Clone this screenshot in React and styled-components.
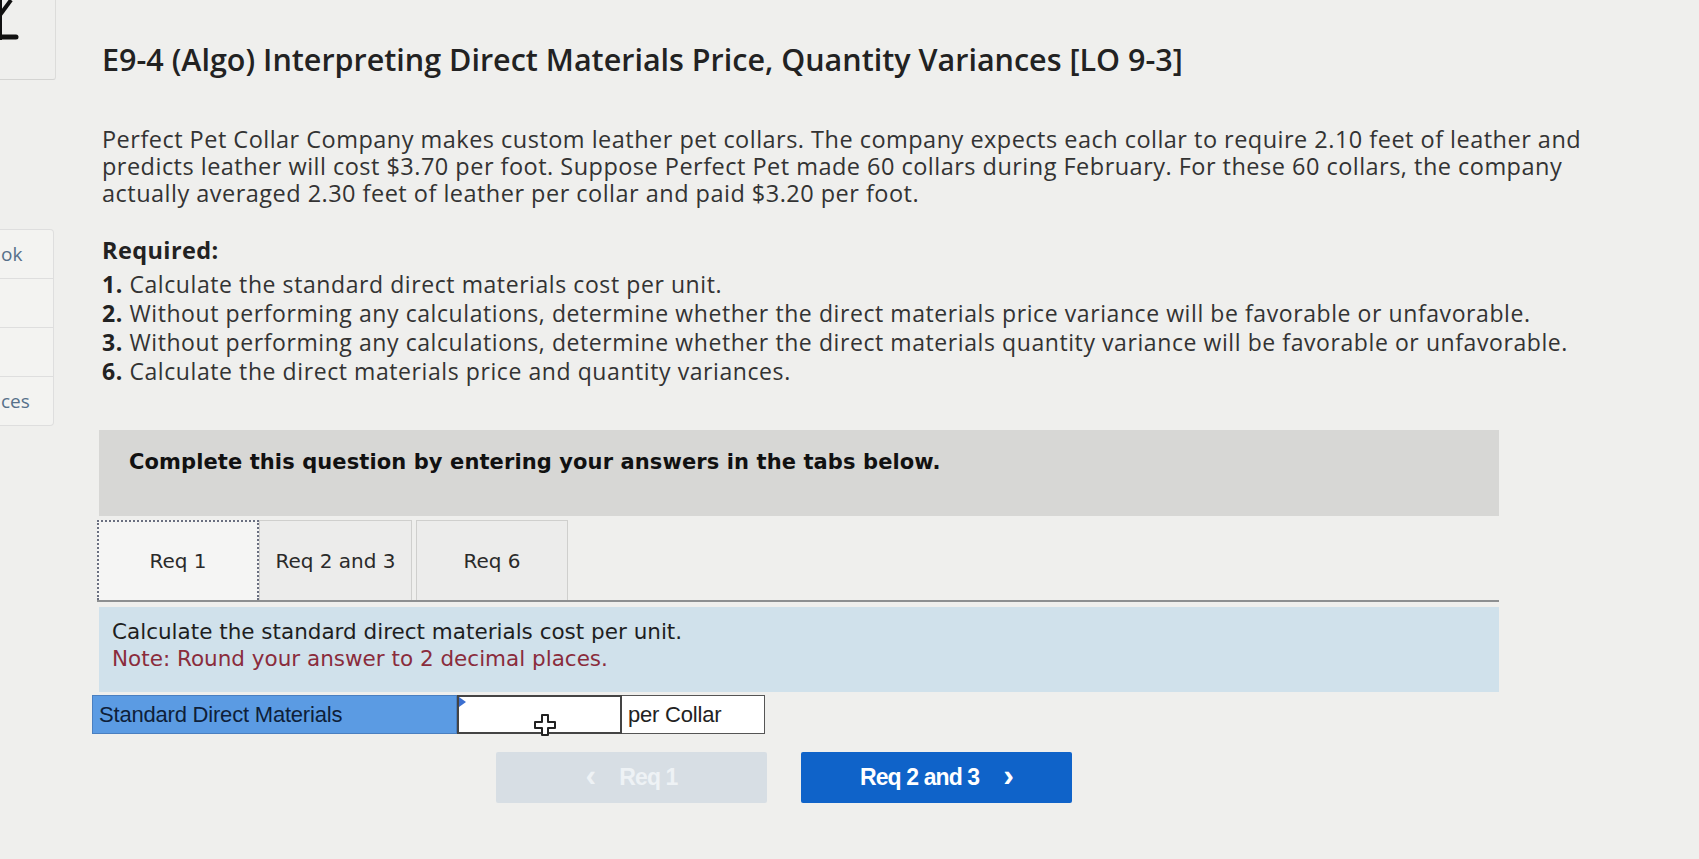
import React from 'react';
import styled, { createGlobalStyle } from 'styled-components';

const GlobalStyle = createGlobalStyle`
  html, body {
    margin: 0;
    padding: 0;
    background: #efefed;
  }
  body {
    font-family: "Open Sans", Lato, "Liberation Sans", sans-serif;
    color: #2b2b2b;
  }
`;

const paragraphLines = [
  'Perfect Pet Collar Company makes custom leather pet collars. The company expects each collar to require 2.10 feet of leather and',
  'predicts leather will cost $3.70 per foot. Suppose Perfect Pet made 60 collars during February. For these 60 collars, the company',
  'actually averaged 2.30 feet of leather per collar and paid $3.20 per foot.',
];

const requirements = [
  { n: '1.', text: 'Calculate the standard direct materials cost per unit.' },
  { n: '2.', text: 'Without performing any calculations, determine whether the direct materials price variance will be favorable or unfavorable.' },
  { n: '3.', text: 'Without performing any calculations, determine whether the direct materials quantity variance will be favorable or unfavorable.' },
  { n: '6.', text: 'Calculate the direct materials price and quantity variances.' },
];

const tabs = [
  { label: 'Req 1', width: 162, active: true },
  { label: 'Req 2 and 3', width: 153 },
  { label: 'Req 6', width: 152 },
];

export default function App() {
  return (
    <>
      <GlobalStyle />
      <Page>
        <Sidebar>
          <TopCard>
            <svg width="20" height="42" viewBox="0 0 20 42">
              <path d="M1 0 V40" stroke="#111" strokeWidth="2" fill="none" />
              <path d="M0 15 L11 0" stroke="#111" strokeWidth="4" fill="none" />
              <path d="M0 37 L16 37" stroke="#111" strokeWidth="5" strokeLinecap="round" fill="none" />
            </svg>
          </TopCard>
          <NavGroup>
            <NavCell><NavText>ok</NavText></NavCell>
            <NavCell />
            <NavCell />
            <NavCell $last><NavText>ces</NavText></NavCell>
          </NavGroup>
        </Sidebar>

        <Main>
          <Title>E9-4 (Algo) Interpreting Direct Materials Price, Quantity Variances [LO 9-3]</Title>

          <Paragraph>
            {paragraphLines.map((l) => (
              <Line key={l}>{l}</Line>
            ))}
          </Paragraph>

          <Required>Required:</Required>
          <ReqList>
            {requirements.map((r) => (
              <ReqItem key={r.n}>
                <ReqNum>{r.n}</ReqNum> {r.text}
              </ReqItem>
            ))}
          </ReqList>

          <Widget>
            <Instruction>Complete this question by entering your answers in the tabs below.</Instruction>

            <TabBar>
              {tabs.map((t) => (
                <Tab key={t.label} $active={t.active} style={{ width: t.width }}>
                  {t.label}
                </Tab>
              ))}
            </TabBar>

            <Prompt>
              <PromptLine>Calculate the standard direct materials cost per unit.</PromptLine>
              <Note>Note: Round your answer to 2 decimal places.</Note>
            </Prompt>

            <AnswerRow>
              <AnswerLabel>Standard Direct Materials</AnswerLabel>
              <AnswerInput>
                <Marker />
                <svg width="26" height="26" viewBox="0 0 26 26">
                  <path
                    d="M10 3 H16 V10 H23 V16 H16 V23 H10 V16 H3 V10 H10 Z"
                    fill="#fff"
                    stroke="#222"
                    strokeWidth="2"
                    strokeLinejoin="round"
                  />
                </svg>
              </AnswerInput>
              <AnswerUnit>per Collar</AnswerUnit>
            </AnswerRow>

            <ButtonRow>
              <NavButton $disabled>
                <Chevron $side="left">‹</Chevron>Req 1
              </NavButton>
              <NavButton>
                Req 2 and 3<Chevron $side="right">›</Chevron>
              </NavButton>
            </ButtonRow>
          </Widget>
        </Main>
      </Page>
    </>
  );
}

const Page = styled.div`
  display: flex;
  min-height: 859px;
  width: 1699px;
  overflow: hidden;
`;

const Sidebar = styled.div`
  width: 56px;
  flex-shrink: 0;
  display: flex;
  flex-direction: column;
`;

const TopCard = styled.div`
  height: 79px;
  border-right: 1px solid #dcdcda;
  border-bottom: 1px solid #d4d4d2;
  border-bottom-right-radius: 3px;
  svg {
    display: block;
  }
`;

const NavGroup = styled.div`
  margin-top: 149px;
  margin-right: 2px;
  display: flex;
  flex-direction: column;
  border: 1px solid #dedede;
  border-left: none;
  border-radius: 0 4px 4px 0;
  background: #f3f3f1;
`;

const NavCell = styled.div`
  height: 48px;
  display: flex;
  align-items: center;
  border-bottom: ${(p) => (p.$last ? 'none' : '1px solid #dedede')};
  overflow: hidden;
`;

const NavText = styled.span`
  margin-left: 1px;
  font-size: 19px;
  color: #56708a;
`;

const Main = styled.div`
  flex: 1;
  padding-left: 46px;
  padding-top: 40px;
`;

const Title = styled.h1`
  margin: 0;
  font-size: 30.5px;
  line-height: 38px;
  font-weight: 600;
  color: #222;
  white-space: nowrap;
`;

const Paragraph = styled.div`
  margin-top: 48px;
  font-size: 23.5px;
  letter-spacing: 0.48px;
  line-height: 27px;
  color: #333;
`;

const Line = styled.div`
  white-space: nowrap;
`;

const Required = styled.div`
  margin-top: 29px;
  font-size: 23.5px;
  letter-spacing: 0.4px;
  line-height: 29px;
  font-weight: 700;
  color: #222;
`;

const ReqList = styled.div`
  margin-top: 5px;
`;

const ReqItem = styled.div`
  font-size: 23px;
  letter-spacing: 0.58px;
  line-height: 29px;
  color: #333;
  white-space: nowrap;
`;

const ReqNum = styled.span`
  font-weight: 700;
  color: #222;
`;

const Widget = styled.div`
  margin-top: 44px;
  width: 1400px;
  margin-left: -3px;
  display: flex;
  flex-direction: column;
`;

const Instruction = styled.div`
  height: 86px;
  box-sizing: border-box;
  padding: 19px 30px;
  background: #d7d7d5;
  font-family: Verdana, "DejaVu Sans", sans-serif;
  font-weight: 700;
  font-size: 21px;
  letter-spacing: 0.1px;
  line-height: 26px;
  color: #111;
`;

const TabBar = styled.div`
  margin-top: 4px;
  display: flex;
  align-items: flex-end;
  border-bottom: 2px solid #8d8f91;
  margin-left: -2px;
`;

const Tab = styled.div`
  height: 80px;
  box-sizing: border-box;
  display: flex;
  align-items: center;
  justify-content: center;
  margin-right: ${(p) => (p.$active ? 0 : 4)}px;
  background: ${(p) => (p.$active ? '#f5f5f4' : '#ececeb')};
  border: ${(p) => (p.$active ? '2px dotted #6a6f80' : '1px solid #cfcfcd')};
  border-bottom: none;
  font-family: Verdana, "DejaVu Sans", sans-serif;
  font-size: 20px;
  color: #2a2a2a;
`;

const Prompt = styled.div`
  margin-top: 5px;
  height: 85px;
  box-sizing: border-box;
  padding: 11px 13px;
  background: #d0e1eb;
  font-family: Verdana, "DejaVu Sans", sans-serif;
  font-size: 21.5px;
  line-height: 27px;
`;

const PromptLine = styled.div`
  color: #1e1e1e;
`;

const Note = styled.div`
  color: #8a2c3c;
`;

const AnswerRow = styled.div`
  margin-top: 3px;
  margin-left: -7px;
  display: flex;
  height: 39px;
  font-family: "Liberation Sans", Arial, sans-serif;
  font-size: 22px;
  letter-spacing: -0.2px;
`;

const AnswerLabel = styled.div`
  width: 365px;
  box-sizing: border-box;
  display: flex;
  align-items: center;
  padding-left: 6px;
  background: #5b9be3;
  border: 1px solid #4a7fc0;
  color: #0e1f3a;
`;

const AnswerInput = styled.div`
  position: relative;
  width: 165px;
  box-sizing: border-box;
  background: #fff;
  border: 2px solid #444;
  display: flex;
  align-items: flex-end;
  justify-content: center;
  svg {
    margin-bottom: -6px;
    margin-left: 10px;
  }
`;

const Marker = styled.span`
  position: absolute;
  left: 0;
  top: 0;
  width: 0;
  height: 0;
  border-top: 5px solid transparent;
  border-bottom: 5px solid transparent;
  border-left: 7px solid #3b6fd0;
`;

const AnswerUnit = styled.div`
  width: 143px;
  box-sizing: border-box;
  display: flex;
  align-items: center;
  padding-left: 6px;
  background: #fff;
  border: 1px solid #555;
  border-left: none;
  color: #222;
`;

const ButtonRow = styled.div`
  margin-top: 18px;
  display: flex;
  justify-content: center;
  gap: 34px;
  padding-right: 30px;
`;

const NavButton = styled.div`
  width: 271px;
  height: 51px;
  box-sizing: border-box;
  display: flex;
  align-items: center;
  justify-content: center;
  border-radius: 2px;
  background: ${(p) => (p.$disabled ? '#d7dee4' : '#0f63c9')};
  color: ${(p) => (p.$disabled ? '#eef2f5' : '#fff')};
  font-family: "Liberation Sans", Arial, sans-serif;
  font-weight: 700;
  font-size: 23px;
  letter-spacing: -0.9px;
`;

const Chevron = styled.span`
  font-size: 32px;
  line-height: 1;
  margin: ${(p) => (p.$side === 'left' ? '0 24px 0 0' : '0 0 0 24px')};
  transform: translateY(-3px);
`;
